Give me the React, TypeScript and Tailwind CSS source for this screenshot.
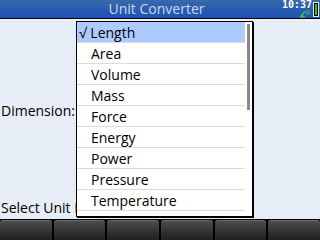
const dimensions = [
  "Length",
  "Area",
  "Volume",
  "Mass",
  "Force",
  "Energy",
  "Power",
  "Pressure",
  "Temperature",
  "Time",
];

export default function App() {
  return (
    <div className="relative flex h-[240px] w-[320px] flex-col overflow-hidden bg-[#e6edf6] font-['Open_Sans',sans-serif] text-black">
      {/* Title bar */}
      <div className="relative flex h-[19px] items-center justify-center border-b border-black bg-gradient-to-b from-[#3769ab] to-[#1d50b6] pr-[7px]">
        <span className="text-[14px] leading-none text-[#cfd8e8]">Unit Converter</span>
        <div className="absolute right-[8px] top-[0px] flex flex-col items-end">
          <span className="font-['DejaVu_Sans_Mono',monospace] text-[10px] font-bold leading-[10px] text-white">10:37</span>
          <svg width="11" height="8" viewBox="0 0 11 8" className="mr-[2px]">
            <path d="M1 7 L6 1.5 M1 7 H6.5" stroke="#2ee02e" strokeWidth="1.2" fill="none" />
            <path d="M3.2 4.8 Q4.4 5.6 4.4 7" stroke="#2ee02e" strokeWidth="1" fill="none" />
            <circle cx="8.8" cy="2.5" r="1.6" stroke="#2ee02e" strokeWidth="1" fill="none" />
          </svg>
        </div>
        <div className="absolute right-[1px] top-[2px] flex h-[15px] w-[6px] items-stretch border border-[#dfe6e0] bg-black p-[1px]">
          <div className="flex-1 bg-[#22c322]" />
        </div>
      </div>
      <div className="h-px bg-[#f3f5f8]" />

      {/* Form */}
      <div className="flex flex-1 flex-col pl-[1px] text-[14px] leading-none">
        <div className="pt-[84px]">Dimension:</div>
        <div className="pt-[83px]">Select Unit Items</div>
      </div>

      {/* Soft keys */}
      <div className="flex h-[21px] gap-[2px] bg-black pt-[1px]">
        {[0, 1, 2, 3, 4, 5].map((i) => (
          <div
            key={i}
            className="flex-1 rounded-t-[3px] border-t border-[#6b6b6b] bg-gradient-to-b from-[#4d4d4d] to-[#1f1f1f]"
          />
        ))}
      </div>

      {/* Dropdown list */}
      <div className="absolute left-[76px] top-[21px] h-[196px] w-[177px] overflow-hidden border border-black bg-white shadow-[1px_1px_0_#000]">
        {dimensions.map((d, i) => (
          <div
            key={d}
            className={
              i === 0
                ? "mr-[7px] flex h-[21px] items-center border-b border-[#dcdcdc] bg-[#adcbff] pl-[2px] text-[14px]"
                : "mr-[7px] flex h-[21px] items-center border-b border-[#dcdcdc] pl-[14px] text-[14px]"
            }
          >
            {i === 0 ? "√ " + d : d}
          </div>
        ))}
        <div className="absolute right-[2px] top-[2px] h-[86px] w-[3px] bg-[#8a8a8a]" />
      </div>
    </div>
  );
}
